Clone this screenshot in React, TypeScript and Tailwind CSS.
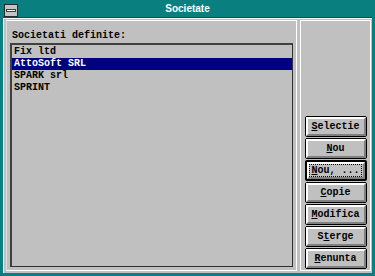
import React from "react";

const COMPANIES = ["Fix ltd", "AttoSoft SRL", "SPARK srl", "SPRINT"];

type Btn = { pre: string; key: string; post: string; isDefault?: boolean };

const BUTTONS: Btn[] = [
  { pre: "", key: "S", post: "electie" },
  { pre: "", key: "N", post: "ou" },
  { pre: "", key: "N", post: "ou, ...", isDefault: true },
  { pre: "", key: "C", post: "opie" },
  { pre: "", key: "M", post: "odifica" },
  { pre: "S", key: "t", post: "erge" },
  { pre: "", key: "R", post: "enunta" },
];

const mono = "font-['Liberation_Mono','DejaVu_Sans_Mono',monospace]";

function DialogButton({ b }: { b: Btn }) {
  return (
    <button
      className={
        "flex h-[21px] w-[62px] items-center justify-center rounded-[2px] bg-[#c0c0c0] p-0 " +
        (b.isDefault ? "border-2 border-black" : "border border-black")
      }
    >
      <span
        className={
          "flex h-full w-full items-center justify-center border-t-2 border-l-2 border-r-2 border-b-2 border-t-white border-l-white border-r-[#808080] border-b-[#808080]"
        }
      >
        <span
          className={
            "text-[10px] font-bold leading-[11px] text-black " +
            mono +
            (b.isDefault ? " border border-dotted border-black px-[1px]" : "")
          }
        >
          {b.pre}
          <span className="underline underline-offset-[1px]">{b.key}</span>
          {b.post}
        </span>
      </span>
    </button>
  );
}

export default function App() {
  return (
    <div className="flex h-[276px] w-[375px] flex-col bg-[#0a7f7f] px-[3px] pb-[3px]">
      {/* title bar */}
      <div className="relative flex h-[18px] shrink-0 items-center justify-center border-b border-[#0b4f4f]">
        <div className="absolute left-[1px] top-[4px] flex h-[13px] w-[14px] items-center justify-center border border-[#2a2a2a] bg-[#c4c4c4]">
          <div className="h-[3px] w-[10px] border border-[#404040] bg-white" />
        </div>
        <span className="font-['Liberation_Sans',Arial,sans-serif] text-[10px] font-bold text-white">
          Societate
        </span>
      </div>

      {/* client area */}
      <div className="flex flex-1 gap-[3px] border-t border-l border-white bg-[#c0c0c0] pt-[1px] pr-[1px] pb-[2px] pl-[2px]">
        {/* list panel */}
        <div className="flex w-[291px] flex-col border border-t-white border-l-[#dcdcdc] border-r-white border-b-white pl-[3px] pr-[3px] pb-[3px]">
          <div className={"mt-[9px] h-[12px] pl-[2px] text-[10px] font-bold leading-[12px] text-black " + mono}>
            Societati definite:
          </div>
          <div className="mt-[1px] flex flex-1 flex-col border-t-2 border-l-2 border-r border-b border-t-[#404040] border-l-[#404040] border-r-[#303030] border-b-[#303030] bg-[#c0c0c0] pt-[1px]">
            {COMPANIES.map((c, i) => (
              <div
                key={c}
                className={
                  "h-[12px] pl-[2px] text-[10px] font-bold leading-[12px] " +
                  mono +
                  (i === 1 ? " bg-[#000080] text-white" : " text-black")
                }
              >
                {c}
              </div>
            ))}
          </div>
        </div>

        {/* button panel */}
        <div className="flex flex-1 flex-col items-center justify-end gap-[1px] border border-white pb-[1px]">
          {BUTTONS.map((b, i) => (
            <DialogButton key={i} b={b} />
          ))}
        </div>
      </div>
    </div>
  );
}
